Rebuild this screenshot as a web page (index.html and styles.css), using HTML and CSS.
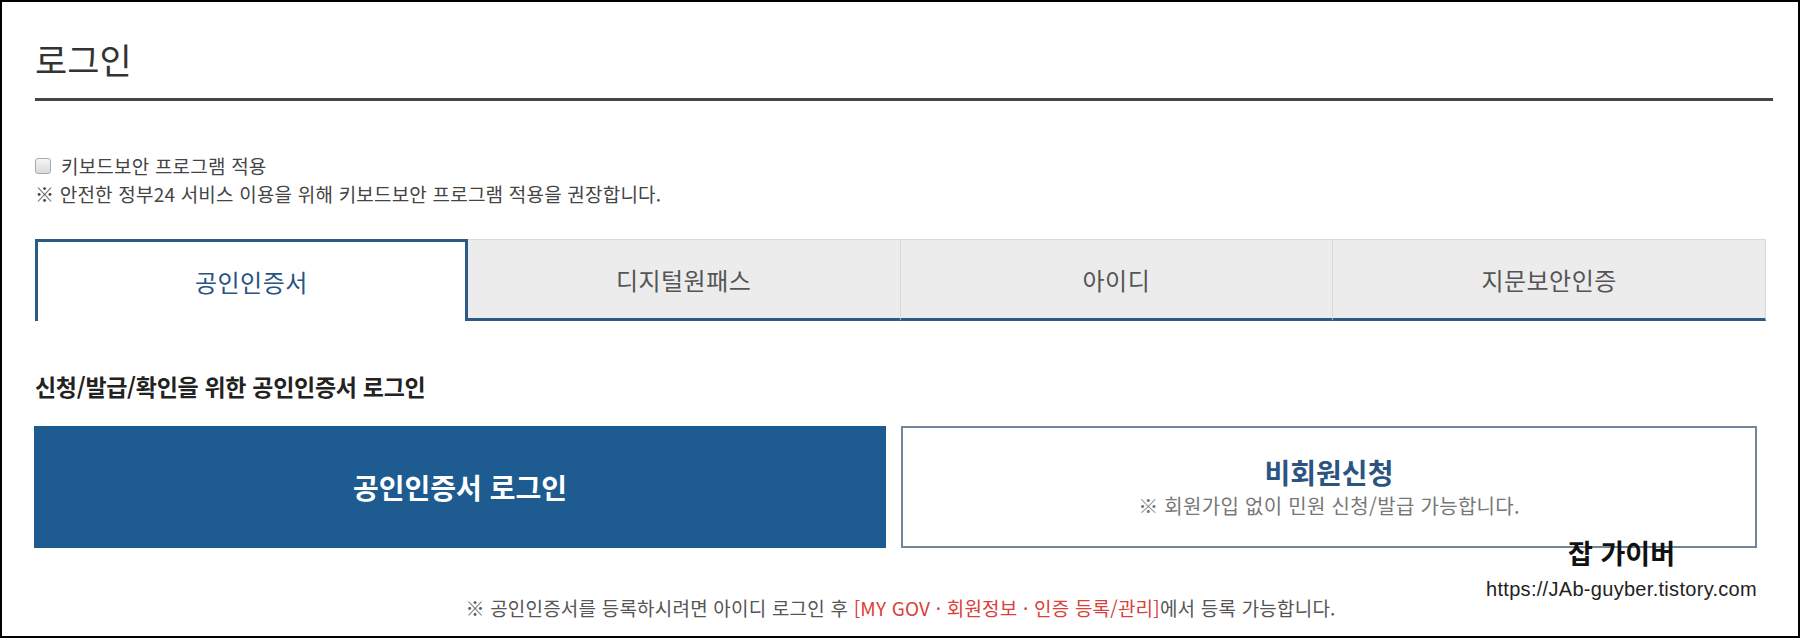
FILE: index.html
```html
<!DOCTYPE html>
<html lang="ko">
<head>
    <meta charset="UTF-8">
    <meta name="viewport" content="width=device-width, initial-scale=1.0">
    <title>로그인</title>
    <link rel="stylesheet" href="styles.css">
</head>
<body>
    <div class="frame">
        <div class="content">
            <div class="page-title">로그인</div>
            <div class="title-line"></div>

            <div class="keyboard">
                <label class="check-row">
                    <input type="checkbox" class="check">
                    <span>키보드보안 프로그램 적용</span>
                </label>
                <div class="notice">※ 안전한 정부24 서비스 이용을 위해 키보드보안 프로그램 적용을 권장합니다.</div>
            </div>

            <div class="tabs">
                <div class="tab active">공인인증서</div>
                <div class="tab">디지털원패스</div>
                <div class="tab">아이디</div>
                <div class="tab">지문보안인증</div>
            </div>

            <div class="section-title">신청/발급/확인을 위한 공인인증서 로그인</div>

            <div class="login-buttons">
                <button class="btn-cert">공인인증서 로그인</button>
                <button class="btn-guest">
                    <span class="guest-title">비회원신청</span>
                    <span class="guest-desc">※ 회원가입 없이 민원 신청/발급 가능합니다.</span>
                </button>
            </div>

            <div class="bottom-note">※ 공인인증서를 등록하시려면 아이디 로그인 후 <span class="red">[MY GOV · 회원정보 · 인증 등록/관리]</span>에서 등록 가능합니다.</div>
        </div>

        <div class="watermark">
            <div class="wm-name">잡 가이버</div>
            <div class="wm-url">https://JAb-guyber.tistory.com</div>
        </div>
    </div>
</body>
</html>
```

FILE: styles.css
```css
body {
    margin: 0;
    background-color: #ffffff;
    font-family: "Noto Sans CJK KR", sans-serif;
    color: #333;
}
.frame {
    position: relative;
    width: 1800px;
    height: 638px;
    box-sizing: border-box;
    border: 2px solid #000;
    padding-left: 33px;
    overflow: hidden;
}
.content {
    width: 1731px;
}
.page-title {
    padding-top: 37px;
    font-size: 35px;
    line-height: 40px;
    color: #333;
}
.title-line {
    margin-top: 19px;
    width: 1738px;
    height: 3px;
    background-color: #454545;
}
.keyboard {
    margin-top: 51px;
    font-size: 19px;
    line-height: 28px;
    letter-spacing: 0.2px;
    color: #444;
}
.check-row {
    display: flex;
    align-items: center;
    gap: 10px;
}
.check {
    appearance: none;
    margin: 0;
    width: 16px;
    height: 16px;
    border: 1px solid #a9a9a9;
    border-radius: 3px;
    background: linear-gradient(#f6f6f6, #d9d9d9);
}
.tabs {
    display: flex;
    margin-top: 31px;
    height: 82px;
}
.tab {
    flex: 0 0 25%;
    display: flex;
    align-items: center;
    justify-content: center;
    box-sizing: border-box;
    background-color: #ececec;
    border-top: 1px solid #d9d9d9;
    border-right: 1px solid #d9d9d9;
    border-bottom: 3px solid #2c5a86;
    font-size: 24px;
    letter-spacing: 0.5px;
    color: #555;
}
.tab.active {
    background-color: #fff;
    border: 3px solid #2c5a86;
    border-bottom: none;
    color: #2a5282;
}
.section-title {
    margin-top: 50px;
    font-size: 23px;
    line-height: 30px;
    font-weight: bold;
    color: #222;
    letter-spacing: -0.3px;
}
.login-buttons {
    display: flex;
    gap: 15px;
    margin-top: 25px;
    margin-left: -1px;
    width: 1723px;
    height: 122px;
}
.login-buttons button {
    flex: 1;
    font-family: inherit;
    cursor: pointer;
}
.btn-cert {
    border: none;
    background-color: #1e5b91;
    color: #fff;
    font-size: 28px;
    font-weight: bold;
}
.btn-guest {
    display: flex;
    flex-direction: column;
    align-items: center;
    justify-content: center;
    gap: 5px;
    background-color: #fff;
    border: 2px solid #72859b;
}
.guest-title {
    font-size: 28px;
    font-weight: bold;
    color: #2b5481;
    line-height: 32px;
}
.guest-desc {
    font-size: 20px;
    letter-spacing: 0.3px;
    color: #777;
    line-height: 26px;
}
.bottom-note {
    margin-top: 48px;
    text-align: center;
    font-size: 19px;
    letter-spacing: 0.2px;
    line-height: 24px;
    color: #555;
}
.red {
    color: #d9403a;
}
.watermark {
    position: absolute;
    right: 41px;
    top: 535px;
    text-align: right;
}
.wm-name {
    padding-right: 82px;
    font-size: 27px;
    font-weight: bold;
    color: #111;
    line-height: 32px;
}
.wm-url {
    margin-top: 9px;
    font-family: "Liberation Sans", sans-serif;
    font-size: 20px;
    letter-spacing: 0.3px;
    line-height: 22px;
    color: #222;
}
```
